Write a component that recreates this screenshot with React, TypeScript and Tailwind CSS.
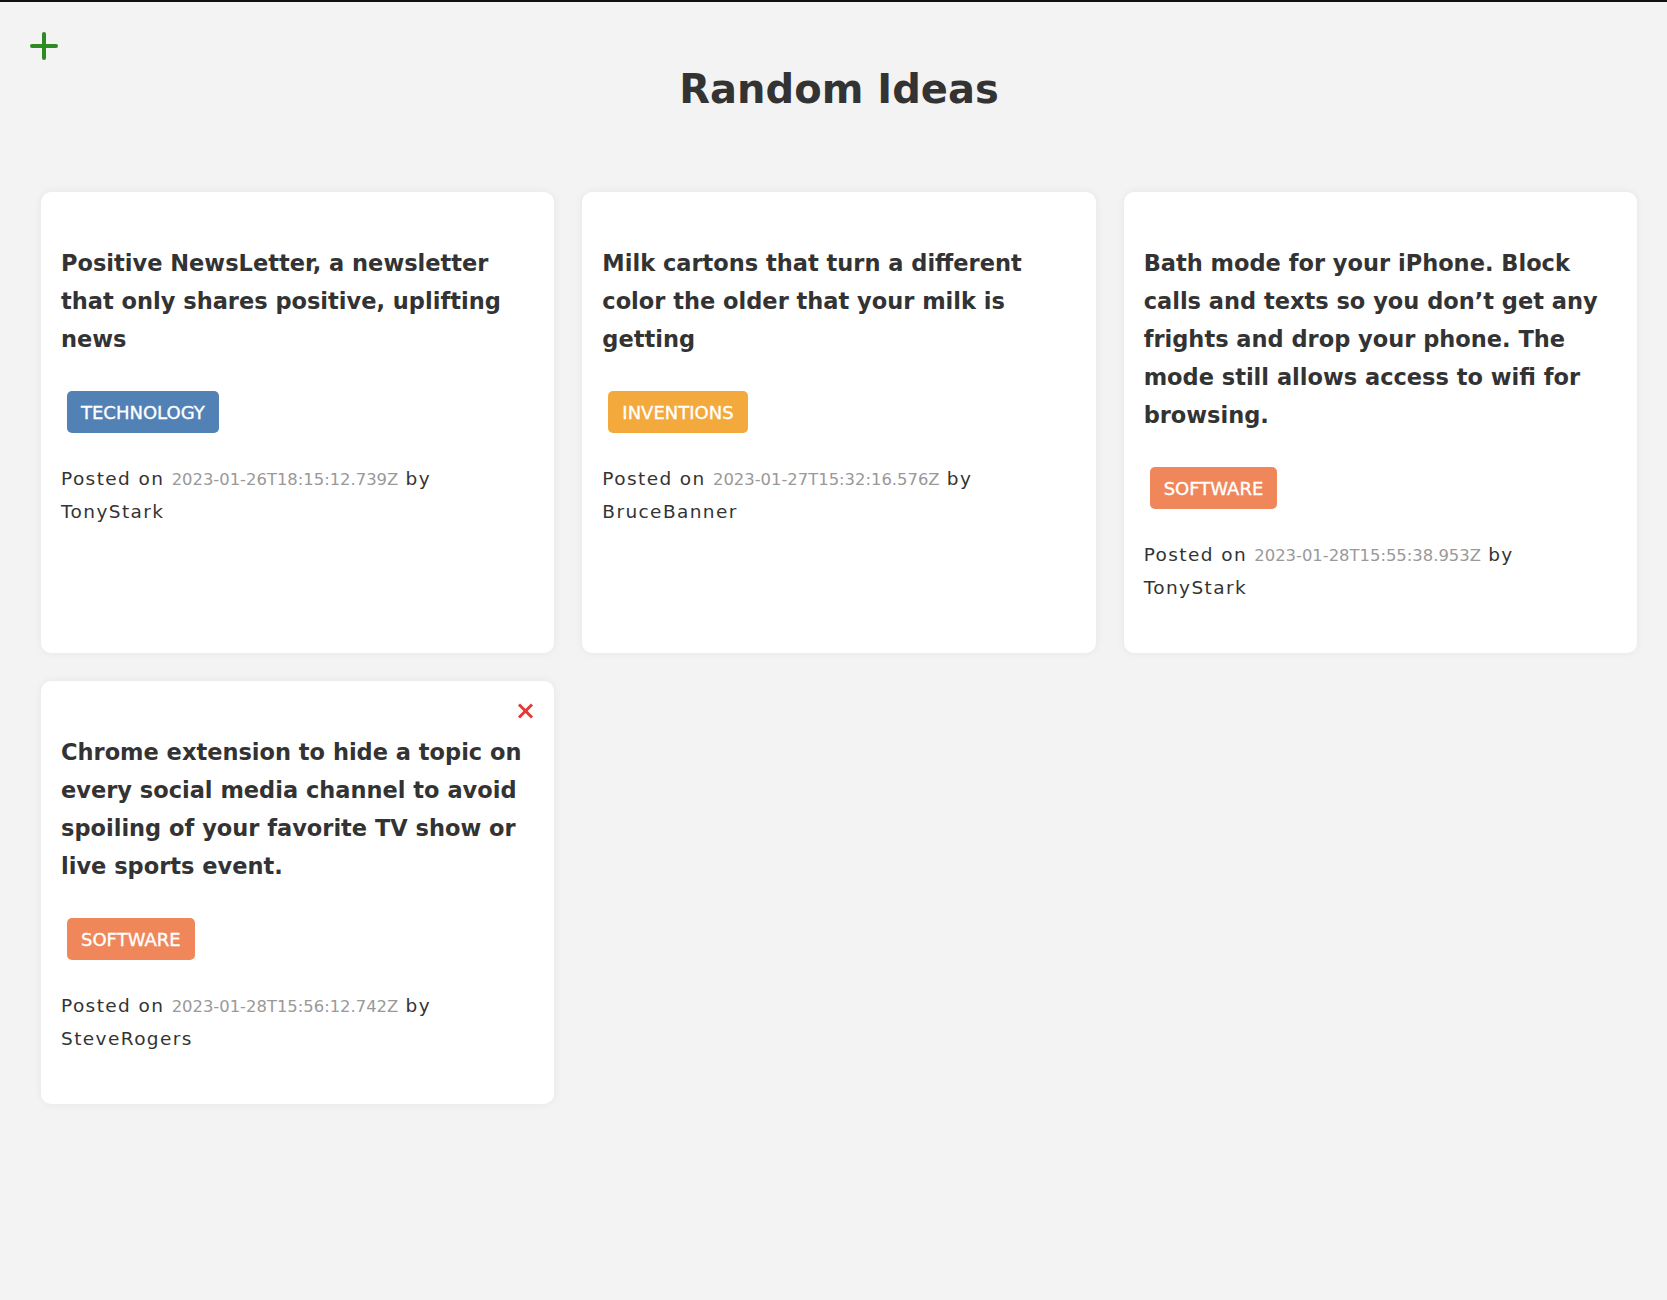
import React from "react";

type Idea = {
  text: string;
  tag: string;
  date: string;
  user: string;
  canDelete?: boolean;
};

const ideas: Idea[] = [
  {
    text: "Positive NewsLetter, a newsletter that only shares positive, uplifting news",
    tag: "technology",
    date: "2023-01-26T18:15:12.739Z",
    user: "TonyStark",
  },
  {
    text: "Milk cartons that turn a different color the older that your milk is getting",
    tag: "inventions",
    date: "2023-01-27T15:32:16.576Z",
    user: "BruceBanner",
  },
  {
    text: "Bath mode for your iPhone. Block calls and texts so you don\u2019t get any frights and drop your phone. The mode still allows access to wifi for browsing.",
    tag: "software",
    date: "2023-01-28T15:55:38.953Z",
    user: "TonyStark",
  },
  {
    text: "Chrome extension to hide a topic on every social media channel to avoid spoiling of your favorite TV show or live sports event.",
    tag: "software",
    date: "2023-01-28T15:56:12.742Z",
    user: "SteveRogers",
    canDelete: true,
  },
];

function Tag({ tag }: { tag: string }) {
  const cls =
    tag === "technology"
      ? "bg-[#5282b5]"
      : tag === "inventions"
      ? "bg-[#f3a93b]"
      : "bg-[#ef875b]";
  return (
    <span
      className={`${cls} ml-[6px] inline-flex h-[42px] items-center rounded-[5px] px-[14px] text-[18px] uppercase text-white [-webkit-text-stroke:0.35px_#fff]`}
    >
      {tag}
    </span>
  );
}

function Card({ idea }: { idea: Idea }) {
  return (
    <div className="rounded-[10px] bg-white px-[20px] pb-[50px] pt-[20px] shadow-[0_0_8px_rgba(0,0,0,0.06)]">
      <div className="flex h-[32px] items-start justify-end">
        {idea.canDelete && (
          <button className="mt-[2px] flex h-[16px] w-[17px] items-center justify-center">
            <svg width="17" height="16" viewBox="0 0 17 16">
              <line x1="2" y1="1.5" x2="15" y2="14.5" stroke="#e53935" strokeWidth="3" />
              <line x1="15" y1="1.5" x2="2" y2="14.5" stroke="#e53935" strokeWidth="3" />
            </svg>
          </button>
        )}
      </div>
      <h3 className="text-[22.5px] font-bold leading-[38px] text-[#333]">
        {idea.text}
      </h3>
      <div className="mt-[33px] flex">
        <Tag tag={idea.tag} />
      </div>
      <p className="mt-[30px] text-[18.5px] leading-[31.5px] tracking-[1.4px] text-[#333]">
        Posted on{" "}
        <span className="text-[16.4px] tracking-normal text-[#999]">{idea.date}</span> by{" "}
        {idea.user}
      </p>
    </div>
  );
}

export default function App() {
  return (
    <div
      className="min-h-[1300px] border-t-2 border-[#111] bg-[#f3f3f3]"
      style={{ fontFamily: "'DejaVu Sans', 'Noto Sans', sans-serif" }}
    >
      <div className="pl-[30px] pt-[30px]">
        <button className="flex h-[28px] w-[28px] items-center justify-center">
          <svg width="28" height="28" viewBox="0 0 28 28">
            <line x1="14" y1="2" x2="14" y2="26" stroke="#2e8b22" strokeWidth="4" strokeLinecap="round" />
            <line x1="2" y1="14" x2="26" y2="14" stroke="#2e8b22" strokeWidth="4" strokeLinecap="round" />
          </svg>
        </button>
      </div>
      <div className="pl-[41px] pr-[30px]">
        <h1 className="mt-[4px] text-center text-[40px] font-bold leading-[50px] text-[#333]">
          Random Ideas
        </h1>
        <div className="mt-[78px] grid grid-cols-3 gap-[28px]">
          {ideas.map((idea, i) => (
            <Card key={i} idea={idea} />
          ))}
        </div>
      </div>
    </div>
  );
}
